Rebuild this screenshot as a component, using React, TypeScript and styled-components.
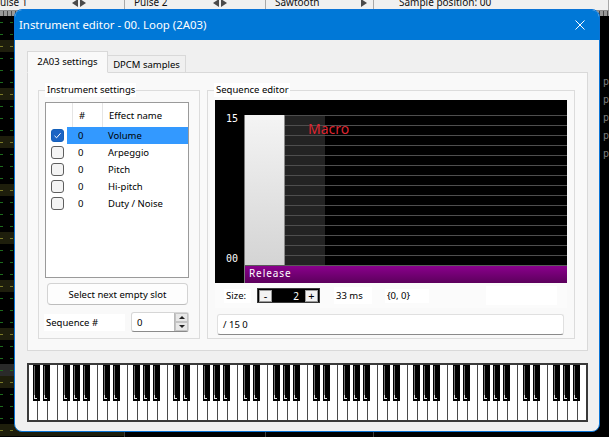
import React from "react";
import styled, { createGlobalStyle } from "styled-components";

const UI = `"Segoe UI", "Noto Sans", "Open Sans", sans-serif`;
const MONO = `"DejaVu Sans Mono", "Liberation Mono", monospace`;

const GlobalStyle = createGlobalStyle`
  html, body { margin: 0; padding: 0; background: #000; }
  body { width: 609px; height: 437px; overflow: hidden; }
  *, *::before, *::after { box-sizing: border-box; }
`;

const Screen = styled.div`
  position: relative;
  width: 609px;
  height: 437px;
  background: #000;
  overflow: hidden;
  font-family: ${UI};
  display: flex;
  flex-direction: column;
`;

/* ---------- background tracker ---------- */
const ChannelBar = styled.div`
  display: flex;
  flex-shrink: 0;
  height: 11px;
  margin-left: -14px;
  background: #f0f0f0;
  border-bottom: 1px solid #8c8c8c;
`;
const ChannelCell = styled.div<{ $w?: number; $pad: number }>`
  display: flex;
  align-items: flex-start;
  flex: ${(p) => (p.$w ? `0 0 ${p.$w}px` : "1 1 auto")};
  padding-left: ${(p) => p.$pad}px;
  border-right: 1px solid #a8a8a8;
  overflow: hidden;
`;
const ChannelName = styled.span`
  font-size: 10px;
  line-height: 10px;
  margin-top: -3px;
  color: #111;
  white-space: nowrap;
`;
const Arrows = styled.span<{ $mr: number }>`
  display: flex;
  gap: 2px;
  margin-left: auto;
  margin-right: ${(p) => p.$mr}px;
  margin-top: -1px;
`;
const ArrowLeft = styled.span`
  width: 0;
  height: 0;
  border-top: 4px solid transparent;
  border-bottom: 4px solid transparent;
  border-right: 6px solid #4a4a4a;
`;
const ArrowRight = styled.span`
  width: 0;
  height: 0;
  border-top: 4px solid transparent;
  border-bottom: 4px solid transparent;
  border-left: 6px solid #4a4a4a;
`;
const MeterStrip = styled.div`
  flex-shrink: 0;
  height: 5px;
  background: repeating-linear-gradient(90deg, #9a9a9a 0 3px, #4a4a4a 3px 4px);
`;
const TrackerBody = styled.div`
  flex: 1;
  display: flex;
`;
const TrackerColumn = styled.div<{ $w: number }>`
  flex: 0 0 ${(p) => p.$w}px;
  border-right: 1px solid #3c3c3c;
  display: flex;
  flex-direction: column;
`;
const TrackerRest = styled.div`
  flex: 1;
  display: flex;
  justify-content: flex-end;
`;
const PatternRow = styled.div<{ $hl: boolean; $cursor: boolean }>`
  height: 12px;
  display: flex;
  align-items: center;
  gap: 7px;
  background: ${(p) => (p.$cursor ? "#2a2a2a" : p.$hl ? "#1e1e0c" : "transparent")};
`;
const Dash = styled.span<{ $hl: boolean }>`
  width: 3px;
  height: 1px;
  background: ${(p) => (p.$hl ? "#7a7a28" : "#1d6b1d")};
`;
const RightGutter = styled.div`
  width: 9px;
  padding-top: 57px;
  font-family: ${MONO};
  font-size: 10px;
  line-height: 18px;
  color: #7c7c7c;
  padding-left: 3px;
`;

/* ---------- dialog ---------- */
const Dialog = styled.div`
  position: absolute;
  left: 14px;
  top: 9px;
  width: 586px;
  height: 423px;
  background: #f0f0f0;
  border: 1px solid #0a74d6;
  border-radius: 8px;
  overflow: hidden;
  display: flex;
  flex-direction: column;
  color: #000;
  font-size: 9.5px;
`;
const TitleBar = styled.div`
  height: 30px;
  flex-shrink: 0;
  background: #0078d7;
  color: #fff;
  display: flex;
  align-items: center;
  justify-content: space-between;
  padding: 0 14px 1px 4px;
  font-size: 11.4px;
`;
const Body = styled.div`
  flex: 1;
  display: flex;
  flex-direction: column;
  padding: 11px 11px 0 12px;
`;
const TabRow = styled.div`
  display: flex;
  align-items: flex-end;
  height: 22px;
  margin-bottom: -1px;
  position: relative;
  z-index: 1;
`;
const Tab = styled.div<{ $active?: boolean }>`
  height: ${(p) => (p.$active ? 22 : 18)}px;
  width: ${(p) => (p.$active ? 81 : 78)}px;
  display: flex;
  align-items: center;
  justify-content: center;
  padding-bottom: ${(p) => (p.$active ? 2 : 0)}px;
  background: ${(p) => (p.$active ? "#f9f9f9" : "#f0f0f0")};
  border: 1px solid #d9d9d9;
  border-left-width: ${(p) => (p.$active ? 1 : 0)}px;
  border-bottom-color: ${(p) => (p.$active ? "#f9f9f9" : "#d9d9d9")};
  white-space: nowrap;
`;
const TabPanel = styled.div`
  width: 561px;
  height: 279px;
  background: #f9f9f9;
  border: 1px solid #d9d9d9;
  display: flex;
  gap: 7px;
  padding: 17px 12px 11px 10px;
`;
const GroupBox = styled.div<{ $w: number }>`
  position: relative;
  flex: 0 0 ${(p) => p.$w}px;
  height: 249px;
  border: 1px solid #dcdcdc;
  display: flex;
  flex-direction: column;
`;
const Legend = styled.span`
  position: absolute;
  top: -8px;
  left: 6px;
  background: #fff;
  line-height: 14px;
  padding: 0 1px 0 2px;
  white-space: nowrap;
`;

/* instrument list */
const ListBox = styled.div`
  margin: 11px 0 0 6px;
  width: 144px;
  height: 176px;
  background: #fff;
  border: 1px solid #9a9a9a;
  display: flex;
  flex-direction: column;
`;
const ListGrid = styled.div<{ $selected?: boolean }>`
  display: grid;
  grid-template-columns: 27px 30px 1fr;
  background: ${(p) =>
    p.$selected ? "linear-gradient(to right, transparent 21px, #3399ff 21px)" : "transparent"};
`;
const HeaderCell = styled.div<{ $sep?: boolean }>`
  height: 24px;
  display: flex;
  align-items: center;
  padding-left: 6px;
  border-right: ${(p) => (p.$sep ? "1px solid #e5e5e5" : "none")};
`;
const Cell = styled.div<{ $pad: number }>`
  height: 17px;
  display: flex;
  align-items: center;
  padding-left: ${(p) => p.$pad}px;
  white-space: nowrap;
`;
const CheckBox = styled.span<{ $checked?: boolean }>`
  width: 13px;
  height: 13px;
  border-radius: 3px;
  border: 1px solid ${(p) => (p.$checked ? "#135fba" : "#5e5e5e")};
  background: ${(p) => (p.$checked ? "#1c64c4" : "#f4f4f4")};
  display: flex;
  align-items: center;
  justify-content: center;
`;
const PushButton = styled.div`
  margin: 5px 0 0 8px;
  width: 141px;
  height: 22px;
  background: #fdfdfd;
  border: 1px solid #d3d3d3;
  border-bottom-color: #bdbdbd;
  border-radius: 4px;
  display: flex;
  align-items: center;
  justify-content: center;
  white-space: nowrap;
`;
const SeqRow = styled.div`
  margin-top: 7px;
  height: 20px;
  display: flex;
  align-items: center;
`;
const WhiteLabel = styled.span<{ $w: number; $h: number; $ml: number }>`
  flex: 0 0 ${(p) => p.$w}px;
  height: ${(p) => p.$h}px;
  margin-left: ${(p) => p.$ml}px;
  background: #fff;
  display: flex;
  align-items: center;
  padding-left: 2px;
  white-space: nowrap;
`;
const SpinEdit = styled.div`
  margin-left: 6px;
  width: 58px;
  height: 20px;
  background: #fff;
  border: 1px solid #d6d6d6;
  border-bottom-color: #8a8a8a;
  border-radius: 3px;
  display: flex;
  align-items: center;
  padding-left: 5px;
`;
const SpinButtons = styled.div`
  margin-left: auto;
  width: 14px;
  height: 18px;
  display: flex;
  flex-direction: column;
  border-left: 1px solid #b9b9b9;
`;
const SpinHalf = styled.div`
  flex: 1;
  background: #e8e8e8;
  border: 1px solid #c4c4c4;
  display: flex;
  align-items: center;
  justify-content: center;
`;
const TriUp = styled.span`
  width: 0;
  height: 0;
  border-left: 3px solid transparent;
  border-right: 3px solid transparent;
  border-bottom: 3px solid #222;
`;
const TriDown = styled.span`
  width: 0;
  height: 0;
  border-left: 3px solid transparent;
  border-right: 3px solid transparent;
  border-top: 3px solid #222;
`;

/* sequence editor */
const Chart = styled.div`
  position: relative;
  margin: 9px 0 0 7px;
  width: 352px;
  height: 183px;
  background: #000;
  flex-shrink: 0;
`;
const ChartSvg = styled.svg`
  position: absolute;
  inset: 0;
`;
const AxisLabel = styled.span<{ $top: number }>`
  position: absolute;
  left: 11px;
  top: ${(p) => p.$top}px;
  font-family: ${MONO};
  font-size: 10px;
  line-height: 12px;
  color: #fff;
`;
const MacroText = styled.span`
  position: absolute;
  left: 93px;
  top: 21px;
  font-size: 14px;
  line-height: 16px;
  color: #dd2530;
`;
const ReleaseText = styled.span`
  position: absolute;
  left: 34px;
  top: 167px;
  font-size: 10px;
  line-height: 12px;
  letter-spacing: 0.9px;
  color: #fff;
`;
const SizeRow = styled.div`
  margin-left: 7px;
  width: 352px;
  height: 25px;
  display: flex;
  align-items: center;
  background: #fbfbfb;
`;
const SizeSpin = styled.div`
  margin-left: 6px;
  width: 63px;
  height: 15px;
  background: #000;
  border: 1px solid #3a3a3a;
  display: flex;
  align-items: center;
  padding: 0 1px;
`;
const SizeButton = styled.span`
  width: 13px;
  height: 12px;
  background: #f2f2f2;
  border: 1px solid #9a9a9a;
  display: flex;
  align-items: center;
  justify-content: center;
  font-size: 11px;
  line-height: 10px;
`;
const SizeValue = styled.span`
  flex: 1;
  text-align: right;
  padding-right: 6px;
  color: #fff;
  font-size: 10px;
`;
const EmptyBox = styled.span`
  margin-left: 57px;
  width: 71px;
  height: 19px;
  background: #fff;
`;
const TextField = styled.div`
  margin: 6px 0 0 9px;
  width: 347px;
  height: 21px;
  background: #fff;
  border: 1px solid #e0e0e0;
  border-bottom-color: #8a8a8a;
  border-radius: 3px;
  display: flex;
  align-items: center;
  padding-left: 5px;
`;
const PianoWrap = styled.div`
  margin-top: 12px;
  width: 561px;
  height: 59px;
  display: flex;
`;

const effects = ["Volume", "Arpeggio", "Pitch", "Hi-pitch", "Duty / Noise"];

function Piano() {
  const seps = [];
  for (let i = 1; i < 56; i++) {
    seps.push(<rect key={"s" + i} x={i * 10} y={2} width={1} height={55} fill="#4a4a4a" />);
  }
  const blacks = [];
  for (let o = 0; o < 8; o++) {
    for (const off of [6, 16, 36, 46, 56]) {
      const x = o * 70 + off;
      blacks.push(
        <g key={`b${o}-${off}`}>
          <rect x={x} y={2} width={7} height={36} fill="#000" />
          <rect x={x + 1} y={3} width={1} height={29} fill="#6e6e6e" />
          <rect x={x + 1} y={32} width={1} height={4} fill="#e4e4e4" />
          <rect x={x + 1} y={35} width={3} height={1} fill="#e4e4e4" />
        </g>
      );
    }
  }
  return (
    <svg width={561} height={59} viewBox="0 0 561 59">
      <rect x={0} y={0} width={561} height={59} fill="#fff" />
      {seps}
      {blacks}
      <rect x={0} y={0} width={561} height={2} fill="#3a3a3a" />
      <rect x={0} y={57} width={561} height={2} fill="#3a3a3a" />
      <rect x={0} y={0} width={2} height={59} fill="#3a3a3a" />
      <rect x={559} y={0} width={2} height={59} fill="#3a3a3a" />
    </svg>
  );
}

function SequenceChart() {
  const lines = [];
  for (let y = 15; y <= 155; y += 10) {
    lines.push(<rect key={y} x={30} y={y} width={322} height={1} fill="#4e4e4e" />);
  }
  return (
    <Chart>
      <ChartSvg width={352} height={183} viewBox="0 0 352 183">
        <defs>
          <linearGradient id="barG" x1="0" y1="0" x2="0" y2="1">
            <stop offset="0" stopColor="#f4f4f4" />
            <stop offset="1" stopColor="#d4d4d4" />
          </linearGradient>
          <linearGradient id="relG" x1="0" y1="0" x2="0" y2="1">
            <stop offset="0" stopColor="#8a008c" />
            <stop offset="1" stopColor="#5c005c" />
          </linearGradient>
        </defs>
        <rect x={70} y={15} width={40} height={150} fill="#232323" />
        {lines}
        <rect x={30} y={165} width={322} height={1} fill="#5a5a5a" />
        <rect x={30} y={15} width={39} height={150} fill="url(#barG)" />
        <rect x={69} y={15} width={1} height={150} fill="#8c8c8c" />
        <rect x={29} y={15} width={1} height={168} fill="#7a7a7a" />
        <rect x={30} y={166} width={322} height={17} fill="url(#relG)" />
      </ChartSvg>
      <AxisLabel $top={13}>15</AxisLabel>
      <AxisLabel $top={153}>00</AxisLabel>
      <MacroText>Macro</MacroText>
      <ReleaseText>Release</ReleaseText>
    </Chart>
  );
}

export default function App() {
  const rows = Array.from({ length: 36 }, (_, i) => i);
  return (
    <>
      <GlobalStyle />
      <Screen>
        <ChannelBar>
          <ChannelCell $w={139} $pad={8}>
            <ChannelName>Pulse 1</ChannelName>
            <Arrows $mr={38}>
              <ArrowLeft />
              <ArrowRight />
            </Arrows>
          </ChannelCell>
          <ChannelCell $w={141} $pad={9}>
            <ChannelName>Pulse 2</ChannelName>
            <Arrows $mr={38}>
              <ArrowLeft />
              <ArrowRight />
            </Arrows>
          </ChannelCell>
          <ChannelCell $w={108} $pad={9}>
            <ChannelName>Sawtooth</ChannelName>
            <Arrows $mr={6}>
              <ArrowRight />
            </Arrows>
          </ChannelCell>
          <ChannelCell $pad={25}>
            <ChannelName>Sample position: 00</ChannelName>
          </ChannelCell>
        </ChannelBar>
        <MeterStrip />
        <TrackerBody>
          <TrackerColumn $w={125}>
            {rows.map((i) => (
              <PatternRow key={i} $hl={i % 4 === 2} $cursor={i === 29}>
                <Dash $hl={i % 4 === 2} />
                <Dash $hl={i % 4 === 2} />
              </PatternRow>
            ))}
          </TrackerColumn>
          <TrackerColumn $w={141} />
          <TrackerColumn $w={108} />
          <TrackerRest>
            <RightGutter>
              {["p", "p", "p", "p", "p"].map((c, i) => (
                <div key={i}>{c}</div>
              ))}
            </RightGutter>
          </TrackerRest>
        </TrackerBody>

        <Dialog>
          <TitleBar>
            <span>Instrument editor - 00. Loop (2A03)</span>
            <svg width={10} height={10} viewBox="0 0 10 10">
              <path d="M0.5 0.5 L9.5 9.5 M9.5 0.5 L0.5 9.5" stroke="#fff" strokeWidth={1} />
            </svg>
          </TitleBar>
          <Body>
            <TabRow>
              <Tab $active>2A03 settings</Tab>
              <Tab>DPCM samples</Tab>
            </TabRow>
            <TabPanel>
              <GroupBox $w={162}>
                <Legend>Instrument settings</Legend>
                <ListBox>
                  <ListGrid>
                    <HeaderCell $sep />
                    <HeaderCell $sep>#</HeaderCell>
                    <HeaderCell>Effect name</HeaderCell>
                  </ListGrid>
                  {effects.map((name, i) => (
                    <ListGrid key={name} $selected={i === 0}>
                      <Cell $pad={5}>
                        <CheckBox $checked={i === 0}>
                          {i === 0 && (
                            <svg width={9} height={9} viewBox="0 0 9 9">
                              <path d="M1.5 4.8 L3.6 6.8 L7.6 2.2" stroke="#fff" strokeWidth={1} fill="none" />
                            </svg>
                          )}
                        </CheckBox>
                      </Cell>
                      <Cell $pad={5}>0</Cell>
                      <Cell $pad={5}>{name}</Cell>
                    </ListGrid>
                  ))}
                </ListBox>
                <PushButton>Select next empty slot</PushButton>
                <SeqRow>
                  <WhiteLabel $w={81} $h={17} $ml={5}>
                    Sequence #
                  </WhiteLabel>
                  <SpinEdit>
                    <span>0</span>
                    <SpinButtons>
                      <SpinHalf>
                        <TriUp />
                      </SpinHalf>
                      <SpinHalf>
                        <TriDown />
                      </SpinHalf>
                    </SpinButtons>
                  </SpinEdit>
                </SeqRow>
              </GroupBox>
              <GroupBox $w={368}>
                <Legend>Sequence editor</Legend>
                <SequenceChart />
                <SizeRow>
                  <WhiteLabel $w={27} $h={14} $ml={9}>
                    Size:
                  </WhiteLabel>
                  <SizeSpin>
                    <SizeButton>-</SizeButton>
                    <SizeValue>2</SizeValue>
                    <SizeButton>+</SizeButton>
                  </SizeSpin>
                  <WhiteLabel $w={38} $h={17} $ml={14}>
                    33 ms
                  </WhiteLabel>
                  <WhiteLabel $w={44} $h={14} $ml={13}>
                    {"{0, 0}"}
                  </WhiteLabel>
                  <EmptyBox />
                </SizeRow>
                <TextField>/ 15 0</TextField>
              </GroupBox>
            </TabPanel>
            <PianoWrap>
              <Piano />
            </PianoWrap>
          </Body>
        </Dialog>
      </Screen>
    </>
  );
}
